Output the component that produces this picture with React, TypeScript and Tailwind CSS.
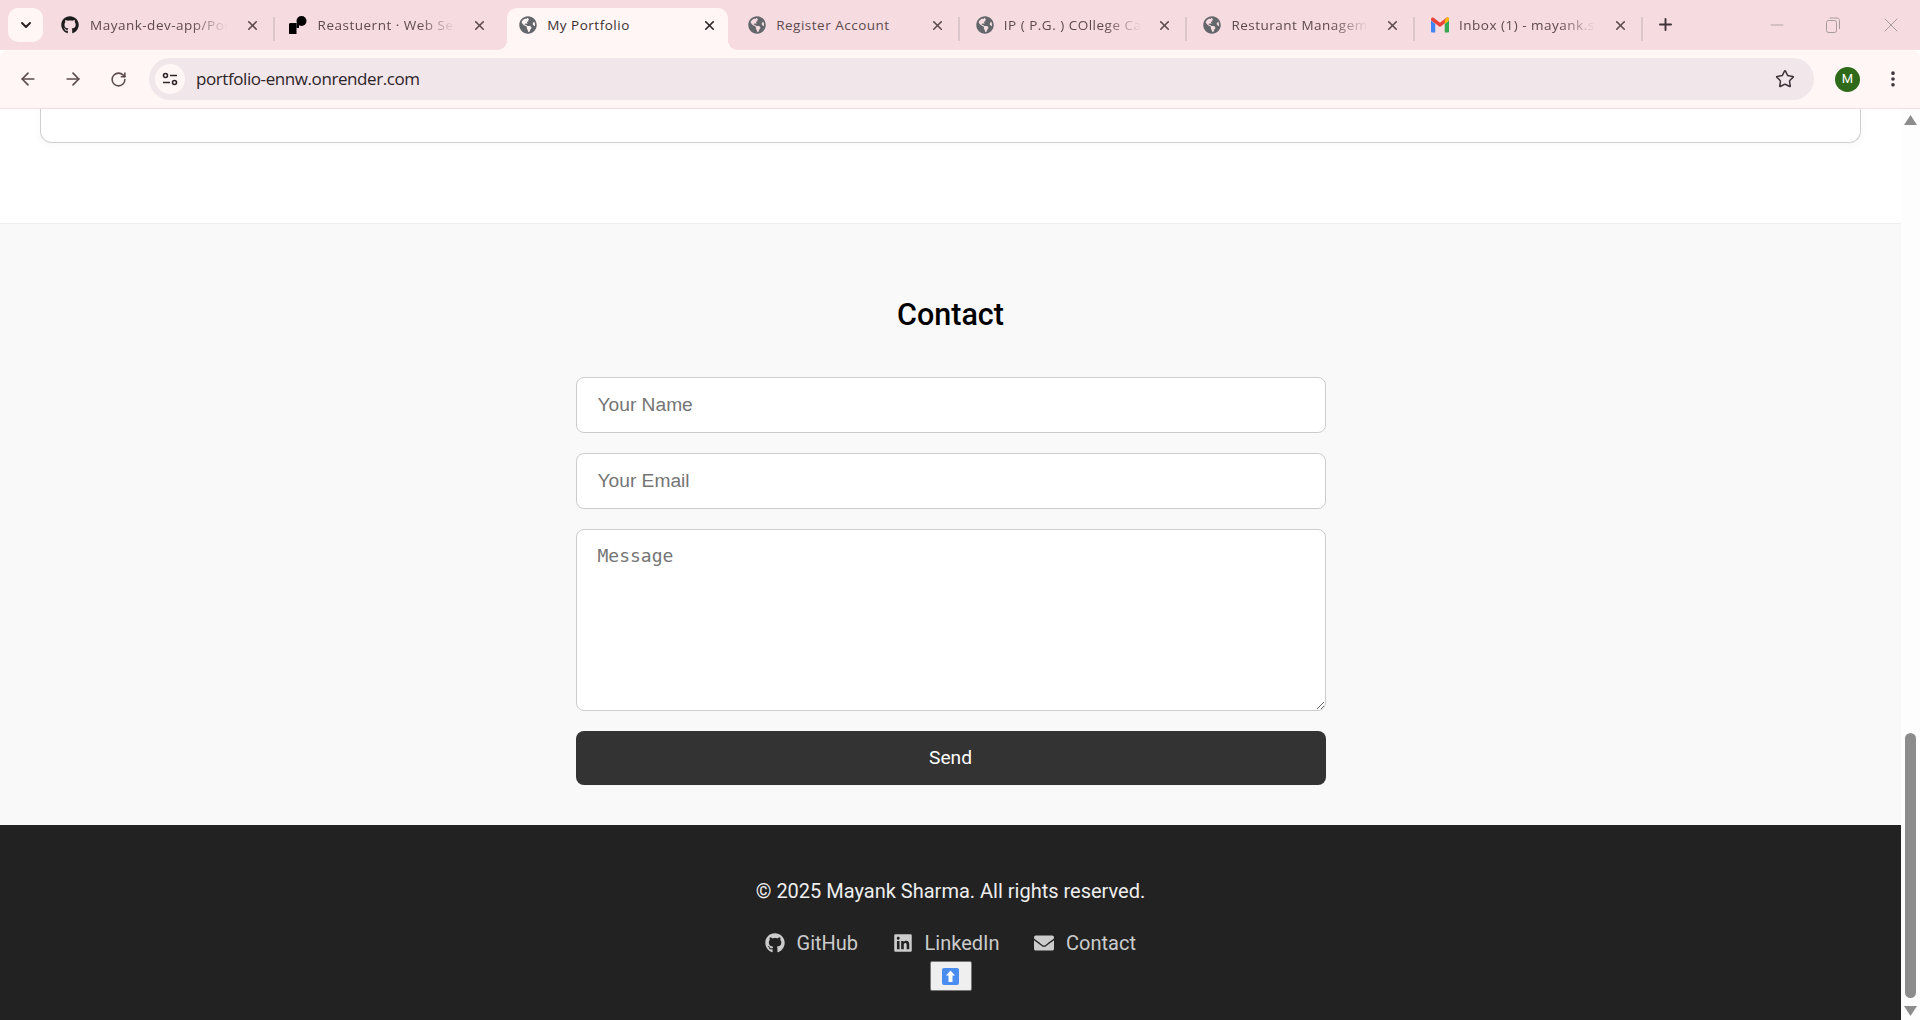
import { ArrowLeft, ArrowRight, RotateCw, X, Plus, Star, EllipsisVertical, ChevronDown, Minus } from "lucide-react";
import { FaGithub, FaLinkedin, FaEnvelope, FaGlobeAmericas } from "react-icons/fa";

function RenderLogo() {
  return (
    <svg width="18" height="18" viewBox="0 0 18 18" fill="#000">
      <path d="M0 18V8.5C0 7.5 .7 7 1.500 7H7.500V18Z" />
      <circle cx="12.5" cy="5" r="5" />
      <path d="M7.500 7H10V12L7.500 12Z" />
    </svg>
  );
}

function GmailLogo() {
  return (
    <svg width="19" height="16" viewBox="0 0 19 16">
      <path d="M0 3V14.500C0 15.300.7 16 1.500 16H4.500V7Z" fill="#4285f4" />
      <path d="M14.500 16H17.500C18.300 16 19 15.300 19 14.500V3L14.500 7Z" fill="#34a853" />
      <path d="M0 3 L0 1.800C0 .3 1.700-.5 2.800.4L9.500 5.500L16.200.4C17.300-.5 19 .3 19 1.800V3L9.500 10.200Z" fill="#ea4335" />
      <path d="M14.500 3.400V7L19 3V1.800C19 .3 17.300-.5 16.200.4Z" fill="#fbbc04" />
    </svg>
  );
}

type TabProps = { icon: React.ReactNode; title: string; active?: boolean; sep?: boolean; fade?: boolean; late?: boolean };

function Tab({ icon, title, active, sep, fade, late }: TabProps) {
  const box = active
    ? "relative w-[221px] ml-[5px] mr-[4px] h-[42px] pb-[8px] flex items-center pl-[12px] pr-[11px] bg-[#fff6f5] rounded-t-[10px]"
    : late
      ? "relative w-[227.6px] h-[42px] pb-[8px] flex items-center pl-[16px] pr-[15px]"
      : "relative w-[227.6px] h-[42px] pb-[8px] flex items-center pl-[14px] pr-[15px]";
  const gap = active || late ? "ml-[10px]" : "ml-[11px]";
  return (
    <div className={box}>
      <span className="w-[18px] h-[18px] flex items-center justify-center shrink-0">{icon}</span>
      <span
        className={`${gap} w-[140px] overflow-hidden whitespace-nowrap text-[13.5px] tracking-[0.5px] ${active ? "text-[#3a2f32]" : "text-[#5d4a4f]"} ${fade ? "[mask-image:linear-gradient(to_right,black_72%,transparent_98%)]" : ""}`}
      >
        {title}
      </span>
      <X size={15} strokeWidth={2.6} className={active ? "ml-auto text-[#2a2224]" : "ml-auto text-[#5d4a4f]"} />
      {sep && <span className="absolute right-0 top-[9px] w-[2px] h-[24px] bg-[#dcc6cb]" />}
      {active && (
        <>
          <span className="absolute -left-[10px] bottom-0 w-[10px] h-[10px] bg-[radial-gradient(circle_at_0_0,#f6dbe0_10px,#fff6f5_10px)]" />
          <span className="absolute -right-[10px] bottom-0 w-[10px] h-[10px] bg-[radial-gradient(circle_at_100%_0,#f6dbe0_10px,#fff6f5_10px)]" />
        </>
      )}
    </div>
  );
}

export default function App() {
  const globe = <FaGlobeAmericas size={18} className="text-[#63666b]" />;
  return (
    <div className="w-[1920px] h-[1020px] overflow-hidden flex flex-col bg-white font-['Roboto',sans-serif]">
      <div className="h-[50px] shrink-0 bg-[#f6dbe0] flex items-end font-['Open_Sans',sans-serif]">
        <button className="w-[35px] h-[34px] ml-[8px] mb-[8px] mr-[4px] bg-[#fff6f5] rounded-[10px] flex items-center justify-center">
          <ChevronDown size={16} strokeWidth={3} className="text-[#2a2224]" />
        </button>
        <Tab icon={<FaGithub size={18} className="text-[#1b1b1b]" />} title="Mayank-dev-app/Portfolio" sep fade />
        <Tab icon={<RenderLogo />} title="Reastuernt · Web Service" fade />
        <Tab icon={globe} title="My Portfolio" active />
        <Tab icon={globe} title="Register Account" sep late />
        <Tab icon={globe} title="IP ( P.G. ) COllege Campus" sep fade late />
        <Tab icon={globe} title="Resturant Management" sep fade late />
        <Tab icon={<GmailLogo />} title="Inbox (1) - mayank.sharma" sep fade late />
        <Plus size={19} strokeWidth={2.4} className="mb-[16px] ml-[13px] text-[#3f3437]" />
        <div className="ml-auto flex items-center mb-[13px] text-[#a89a9d]">
          <Minus size={20} strokeWidth={1} className="mr-[39.5px]" />
          <svg width="14" height="16" viewBox="0 0 14 16" fill="none" stroke="currentColor" className="mr-[39px]">
            <rect x=".5" y="3.500" width="10" height="12" rx="2" />
            <path d="M3.500 1H11C12.400 1 13.500 2 13.500 3.500V12" />
          </svg>
          <X size={24} strokeWidth={1} className="mr-[17px]" />
        </div>
      </div>

      <div className="h-[59px] shrink-0 bg-[#fff6f5] border-b border-[#f3dfe2] rounded-t-[8px] flex items-center">
        <ArrowLeft size={20} strokeWidth={2} className="ml-[18px] text-[#5c4a4e]" />
        <ArrowRight size={20} strokeWidth={2} className="ml-[25px] text-[#5c4a4e]" />
        <RotateCw size={17} strokeWidth={2.2} className="ml-[27px] text-[#5c4a4e]" />
        <div className="ml-[22px] w-[1665px] h-[42px] rounded-full bg-[#f1e6ea] flex items-center pl-[6px] pr-[19px]">
          <span className="w-[30px] h-[30px] rounded-full bg-[#fff6f5] flex items-center justify-center">
            <svg width="16" height="14" viewBox="0 0 16 14" fill="none" stroke="#2d2427" strokeWidth="1.600">
              <circle cx="3.500" cy="3.500" r="2" />
              <path d="M8 3.500H15M1 10.500H8" />
              <circle cx="12.500" cy="10.500" r="2" />
            </svg>
          </span>
          <span className="ml-[11px] text-[17px] text-[#2d2427] font-['Open_Sans',sans-serif] tracking-[-0.42px]">portfolio-ennw.onrender.com</span>
          <Star size={20} strokeWidth={1.8} className="ml-auto text-[#40353a]" />
        </div>
        <span className="ml-[21px] w-[25px] h-[25px] rounded-full bg-[#2f6a1a] text-white text-[13px] flex items-center justify-center">M</span>
        <EllipsisVertical size={20} strokeWidth={2.4} className="ml-[23px] text-[#40353a]" />
      </div>

      <div className="flex-1 flex min-h-0">
        <div className="flex-1 min-w-0 flex flex-col">
          <div className="h-[115px] shrink-0 bg-white border-b border-[#eeeeee] px-[40px]">
            <div className="h-[34px] bg-white border-x border-b border-[#cfcfcf] rounded-b-[12px] shadow-[0_2px_8px_rgba(0,0,0,0.04)]" />
          </div>
          <div className="h-[601px] shrink-0 bg-[#f9f9f9] pt-[72px] flex flex-col items-center">
            <h2 className="h-[38px] leading-[38px] text-[30.5px] font-medium text-black">Contact</h2>
            <form className="mt-[43px] w-[750px] flex flex-col gap-[20px]">
              <input placeholder="Your Name" className="h-[56px] pl-[21px] pr-5 bg-white border border-[#cccccc] rounded-[8px] text-[19.2px] font-['Liberation_Sans',sans-serif] placeholder:text-[#757575]" />
              <input placeholder="Your Email" className="h-[56px] pl-[21px] pr-5 bg-white border border-[#cccccc] rounded-[8px] text-[19.2px] font-['Liberation_Sans',sans-serif] placeholder:text-[#757575]" />
              <textarea placeholder="Message" className="h-[182px] pl-[21px] pr-5 py-3 bg-white border border-[#cccccc] rounded-[8px] text-[18px] font-['DejaVu_Sans_Mono',monospace] placeholder:text-[#757575]" />
              <button type="button" className="h-[54px] bg-[#333333] rounded-[8px] text-white text-[19.2px]">Send</button>
            </form>
          </div>
          <div className="flex-1 bg-[#222222] pt-[52px] flex flex-col items-center">
            <p className="h-[28px] leading-[28px] text-[20px] text-[#eeeeee]">© 2025 Mayank Sharma. All rights reserved.</p>
            <div className="mt-[24px] flex items-center gap-[34.5px] text-[20px] text-[#cccccc] h-[28px]">
              <span className="flex items-center gap-[11.5px]"><FaGithub size={20} />GitHub</span>
              <span className="flex items-center gap-[12px]"><FaLinkedin size={20} />LinkedIn</span>
              <span className="flex items-center gap-[12px]"><FaEnvelope size={20} />Contact</span>
            </div>
            <button className="mt-[4px] w-[42px] h-[30px] bg-[#efefef] border border-[#767676] rounded-[2px] flex items-center justify-center">
              <svg width="17" height="17" viewBox="0 0 17 17">
                <rect width="17" height="17" rx="2" fill="#4a8df0" />
                <path d="M8.500 2.500L13 7.500H10.500V14H6.500V7.500H4Z" fill="#fff" />
              </svg>
            </button>
          </div>
        </div>
        <div className="w-[19px] shrink-0 bg-[#fdfdfd] flex flex-col items-center">
          <svg width="13" height="10" viewBox="0 0 13 10" className="mt-[6px]"><path d="M6.500 0L13 10H0Z" fill="#8c8c8c" /></svg>
          <div className="mt-[608px] w-[11px] h-[265px] rounded-full bg-[#8c8c8c]" />
          <svg width="13" height="10" viewBox="0 0 13 10" className="mt-[8px]"><path d="M6.500 10L13 0H0Z" fill="#8c8c8c" /></svg>
        </div>
      </div>
    </div>
  );
}
